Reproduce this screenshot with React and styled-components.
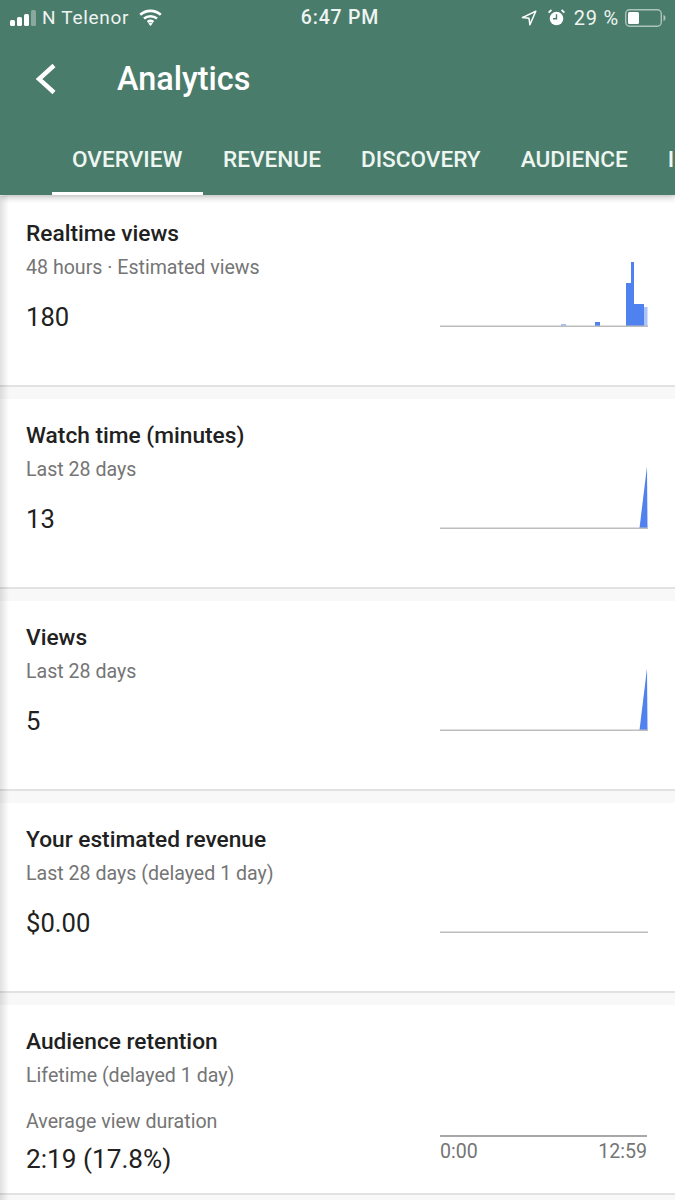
import styled, { createGlobalStyle } from 'styled-components';

const GlobalStyle = createGlobalStyle`
  html, body {
    margin: 0;
    padding: 0;
    height: 1200px;
    overflow: hidden;
    background: #f8f8f8;
    font-family: Roboto, 'Liberation Sans', sans-serif;
  }
`;

const Screen = styled.div`
  position: relative;
  width: 675px;
  height: 1200px;
  overflow: hidden;
  background: #f8f8f8;

  &::after {
    content: '';
    position: absolute;
    top: 196px;
    left: 0;
    bottom: 0;
    width: 9px;
    background: linear-gradient(to right, rgba(0, 0, 0, 0.12), rgba(0, 0, 0, 0));
  }
`;

const Header = styled.header`
  position: relative;
  z-index: 1;
  height: 195px;
  background: #4a7c6b;
  color: #fff;
  box-shadow: 0 3px 6px rgba(0, 0, 0, 0.2);
`;

const StatusBar = styled.div`
  display: grid;
  grid-template-columns: 1fr auto 1fr;
  align-items: center;
  height: 35px;
  padding: 0 9px 0 10px;
  font-size: 19px;
  color: #eef4f1;
`;

const StatusLeft = styled.div`
  display: flex;
  align-items: center;
  gap: 6px;
`;

const Carrier = styled.span`
  letter-spacing: 0.7px;
  margin-right: 4px;
`;

const Clock = styled.div`
  padding-left: 4px;
  font-size: 19.5px;
  font-weight: 500;
  letter-spacing: 0.8px;
`;

const StatusRight = styled.div`
  display: flex;
  align-items: center;
  justify-content: flex-end;
  gap: 9px;

  svg:first-child {
    margin-right: 2px;
  }
`;

const Percent = styled.span`
  font-size: 20px;
  letter-spacing: 0.8px;
  margin-right: -3px;
`;

const Toolbar = styled.div`
  display: flex;
  align-items: center;
  height: 87px;
  padding-left: 35px;
  gap: 60px;
`;

const Title = styled.h1`
  margin: 0;
  font-size: 32.4px;
  font-weight: 500;
  color: #fff;
`;

const Tabs = styled.nav`
  display: flex;
  height: 73px;
  padding-left: 52px;
  overflow: hidden;
`;

const Tab = styled.div`
  flex: none;
  display: flex;
  align-items: center;
  height: 73px;
  padding: 5px 20px 0;
  box-sizing: border-box;
  font-size: 22.6px;
  font-weight: 500;
  white-space: nowrap;
  color: #eef6f2;
  border-bottom: 3px solid ${(p) => (p.$active ? '#fff' : 'transparent')};
`;

const ActiveTab = styled(Tab)`
  width: 151px;
`;

const Card = styled.section`
  display: flex;
  justify-content: space-between;
  height: 188px;
  padding: 0 27px 0 26px;
  background: #fff;
  border-bottom: 2px solid #e2e2e2;
  margin-bottom: 12px;

  &:first-of-type {
    margin-top: 2px;
  }
`;

const Info = styled.div`
  display: flex;
  flex-direction: column;
`;

const CardTitle = styled.h2`
  margin: 24px 0 0;
  height: 26px;
  line-height: 26px;
  font-size: 22.7px;
  font-weight: 500;
  color: #212121;
`;

const Sub = styled.div`
  margin-top: ${(p) => p.$gap || 8}px;
  height: 26px;
  line-height: 26px;
  font-size: 19.6px;
  color: #757575;
`;

const Value = styled.div`
  margin-top: ${(p) => p.$gap || 20}px;
  height: 32px;
  line-height: 32px;
  font-size: 25.6px;
  color: #212121;
`;

const RetentionValue = styled(Value)`
  font-size: 26.2px;
`;

const ChartSlot = styled.div`
  width: 208px;
  padding-top: 65px;
`;

const TimeSlot = styled.div`
  width: 207px;
  margin-right: 1px;
  padding-top: 130px;
`;

const TimeLabels = styled.div`
  display: flex;
  justify-content: space-between;
  border-top: 2px solid #a8a8a8;
  padding-top: 3px;
  line-height: 24px;
  font-size: 19.6px;
  color: #757575;
`;

const BLUE = '#4f82ee';
const PALE = '#a9c4fb';
const LINE = '#bdbdbd';

function Signal() {
  return (
    <svg width="26" height="16" viewBox="0 0 26 16">
      <rect x="0" y="10" width="5" height="6" rx="1.5" fill="#fff" />
      <rect x="7" y="7" width="5" height="9" rx="1.5" fill="#fff" />
      <rect x="14" y="4" width="5" height="12" rx="1.5" fill="#fff" />
      <rect x="21" y="0" width="5" height="16" rx="1.5" fill="#fff" opacity="0.35" />
    </svg>
  );
}

function Wifi() {
  return (
    <svg width="23" height="17" viewBox="0 0 23 17" fill="none" stroke="#fff" strokeWidth="2.6">
      <path d="M1.2 5.8C7 .6 16 .6 21.8 5.8" />
      <path d="M5 9.6c3.7-3.2 9.300-3.200 13 0" />
      <path d="M8.6 13c1.7-1.3 4.100-1.300 5.800 0" />
      <path d="M11.5 17l-2.200-2.600c1.300-.9 3.100-.9 4.400 0z" fill="#fff" stroke="none" />
    </svg>
  );
}

function LocationArrow() {
  return (
    <svg width="16" height="16" viewBox="0 0 16 16" fill="none" stroke="#fff" strokeWidth="1.5" strokeLinejoin="round">
      <path d="M14.8 1.2 1.4 7.6l6.6.6.9 6.6z" />
    </svg>
  );
}

function Alarm() {
  return (
    <svg width="17" height="17" viewBox="0 0 17 17">
      <circle cx="8.5" cy="9.5" r="6.8" fill="#fff" />
      <path d="M8.5 5.2v4.6H5" fill="none" stroke="#4a7c6b" strokeWidth="1.4" />
      <path d="M.6 3.6 3.4 1M16.400 3.600 13.600 1" stroke="#fff" strokeWidth="1.8" />
    </svg>
  );
}

function Battery() {
  return (
    <svg width="41" height="18" viewBox="0 0 41 18">
      <rect x="0.7" y="0.7" width="35.6" height="16.6" rx="4" fill="none" stroke="#fff" strokeOpacity="0.55" strokeWidth="1.4" />
      <rect x="3" y="3" width="11" height="12" rx="1.5" fill="#fff" />
      <path d="M38.5 6c1.500.4 2 1.600 2 3s-.5 2.600-2 3z" fill="#fff" opacity="0.55" />
    </svg>
  );
}

function BackArrow() {
  return (
    <svg width="22" height="32" viewBox="0 0 22 32" fill="none" stroke="#fff" strokeWidth="4.4">
      <path d="M19 2.500 4 16l15 13.500" />
    </svg>
  );
}

function RealtimeChart() {
  return (
    <svg width="208" height="65" viewBox="0 0 208 65" display="block">
      <rect x="121" y="62.500" width="5" height="1" fill={BLUE} />
      <rect x="155" y="60" width="5" height="4" fill={BLUE} />
      <path d="M186 64V21h5V0h3v42h10v22z" fill={BLUE} />
      <path d="M204 45h3.500v19H204z" fill={PALE} />
      <rect x="0" y="63.500" width="208" height="1.500" fill={LINE} />
    </svg>
  );
}

function SpikeChart() {
  return (
    <svg width="208" height="65" viewBox="0 0 208 65" display="block">
      <path d="M199.500 64 207 2.500 207.500 64z" fill={BLUE} />
      <rect x="0" y="63.500" width="208" height="1.500" fill={LINE} />
    </svg>
  );
}

function FlatChart() {
  return (
    <svg width="208" height="65" viewBox="0 0 208 65" display="block">
      <rect x="0" y="63.500" width="208" height="1.500" fill={LINE} />
    </svg>
  );
}

const cards = [
  { title: 'Realtime views', sub: '48 hours · Estimated views', value: '180', chart: <RealtimeChart /> },
  { title: 'Watch time (minutes)', sub: 'Last 28 days', value: '13', chart: <SpikeChart /> },
  { title: 'Views', sub: 'Last 28 days', value: '5', chart: <SpikeChart /> },
  { title: 'Your estimated revenue', sub: 'Last 28 days (delayed 1 day)', value: '$0.00', chart: <FlatChart /> },
];

export default function App() {
  return (
    <Screen>
      <GlobalStyle />
      <Header>
        <StatusBar>
          <StatusLeft>
            <Signal />
            <Carrier>N Telenor</Carrier>
            <Wifi />
          </StatusLeft>
          <Clock>6:47 PM</Clock>
          <StatusRight>
            <LocationArrow />
            <Alarm />
            <Percent>29 %</Percent>
            <Battery />
          </StatusRight>
        </StatusBar>
        <Toolbar>
          <BackArrow />
          <Title>Analytics</Title>
        </Toolbar>
        <Tabs>
          <ActiveTab $active>OVERVIEW</ActiveTab>
          <Tab>REVENUE</Tab>
          <Tab>DISCOVERY</Tab>
          <Tab>AUDIENCE</Tab>
          <Tab>INTERACTIVE CONTENT</Tab>
        </Tabs>
      </Header>
      {cards.map((card) => (
        <Card key={card.title}>
          <Info>
            <CardTitle>{card.title}</CardTitle>
            <Sub>{card.sub}</Sub>
            <Value>{card.value}</Value>
          </Info>
          <ChartSlot>{card.chart}</ChartSlot>
        </Card>
      ))}
      <Card>
        <Info>
          <CardTitle>Audience retention</CardTitle>
          <Sub>Lifetime (delayed 1 day)</Sub>
          <Sub $gap={20}>Average view duration</Sub>
          <RetentionValue $gap={8}>2:19 (17.8%)</RetentionValue>
        </Info>
        <TimeSlot>
          <TimeLabels>
            <span>0:00</span>
            <span>12:59</span>
          </TimeLabels>
        </TimeSlot>
      </Card>
    </Screen>
  );
}
